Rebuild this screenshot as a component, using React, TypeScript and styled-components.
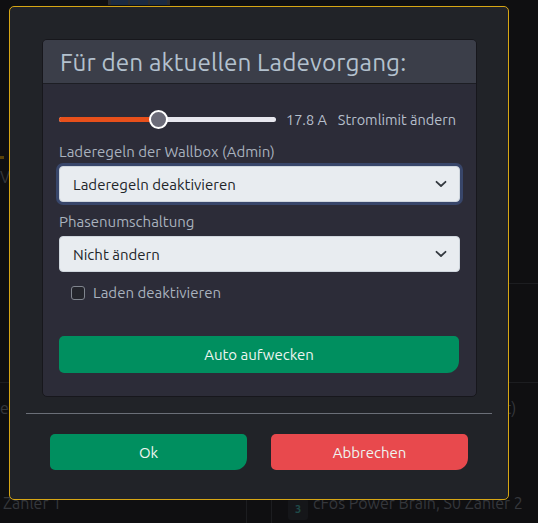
import React from 'react';
import styled, { createGlobalStyle } from 'styled-components';

const GlobalStyle = createGlobalStyle`
  html, body {
    margin: 0;
    padding: 0;
    background: #0f0f11;
    font-family: Ubuntu, 'Noto Sans', 'Open Sans', sans-serif;
  }
`;

const Page = styled.div`
  position: relative;
  width: 538px;
  height: 523px;
  overflow: hidden;
  background: #0f0f11;
`;

// faint dashboard pieces behind the modal overlay
const Behind = styled.div`
  position: absolute;
  inset: 0;
  pointer-events: none;
`;

const TopTiles = styled.div`
  position: absolute;
  left: 108px;
  top: 0;
  width: 56px;
  height: 5px;
  display: flex;
  gap: 2px;
  padding: 0 3px;
  background: #2a2b2f;
`;

const Tile = styled.div`
  flex: 1;
  background: #1b2a42;
`;

const GhostText = styled.span<{ $x: number; $y: number }>`
  position: absolute;
  left: ${(p) => p.$x}px;
  top: ${(p) => p.$y}px;
  color: #35373c;
  font-size: 16px;
  white-space: nowrap;
`;

const GhostLine = styled.div<{ $x: number; $y: number; $w: number; $h: number }>`
  position: absolute;
  left: ${(p) => p.$x}px;
  top: ${(p) => p.$y}px;
  width: ${(p) => p.$w}px;
  height: ${(p) => p.$h}px;
  background: #1c1d20;
`;

const Badge = styled.span`
  position: absolute;
  left: 288px;
  top: 498px;
  width: 20px;
  height: 22px;
  border-radius: 3px;
  background: #151619;
  color: #1f4a48;
  font-size: 11px;
  font-weight: 700;
  display: flex;
  align-items: center;
  justify-content: center;
`;

const OrangeDash = styled.div`
  position: absolute;
  left: 0;
  top: 156px;
  width: 4px;
  height: 3px;
  background: #5a4208;
`;

const Wrapper = styled.div`
  position: relative;
  padding: 6px 0 0 9px;
`;

const Modal = styled.div`
  width: 498px;
  height: 492px;
  background: #212328;
  border: 1px solid #d7a614;
  border-radius: 5px;
  display: flex;
  flex-direction: column;
`;

const Body = styled.div`
  padding: 32px 32px 16px 32px;
`;

const Card = styled.div`
  width: 433px;
  border: 1px solid #17171c;
  border-radius: 5px;
  background: #2c2c38;
  overflow: hidden;
`;

const CardHeader = styled.div`
  height: 43px;
  display: flex;
  align-items: center;
  padding: 0 17px;
  background: #3b3e49;
  border-bottom: 1px solid #1d1e24;
`;

const Title = styled.h4`
  margin: 0;
  font-size: 24.3px;
  font-weight: 400;
  color: #b3c1ce;
  letter-spacing: 0.1px;
`;

const CardBody = styled.div`
  padding: 25px 16px 23px 16px;
  display: flex;
  flex-direction: column;
`;

const SliderRow = styled.div`
  display: flex;
  align-items: center;
  height: 20px;
  color: #b6bfcb;
  font-size: 14.5px;
`;

const Track = styled.div`
  position: relative;
  width: 217px;
  height: 5px;
  border-radius: 3px;
  background: #e7e7ee;
  margin-right: 10px;
`;

const Fill = styled.div`
  height: 100%;
  border-radius: 3px;
  background: #e8501b;
`;

const Thumb = styled.div`
  position: absolute;
  top: 50%;
  width: 15px;
  height: 15px;
  margin-left: -9.5px;
  margin-top: -9.5px;
  border-radius: 50%;
  border: 2px solid #ffffff;
  background: #6b6b78;
`;

const Unit = styled.span`
  margin-right: 11px;
`;

const Label = styled.div<{ $top: number }>`
  margin-top: ${(p) => p.$top}px;
  color: #a9b2be;
  font-size: 15px;
  line-height: 18px;
`;

const SelectBox = styled.div<{ $focus?: boolean }>`
  margin-top: 5px;
  height: 34px;
  border: 1px solid #cfd6dd;
  border-radius: 4px;
  background: #e8ecf0;
  display: flex;
  align-items: center;
  justify-content: space-between;
  padding: 0 12px 0 13px;
  color: #212529;
  font-size: 15px;
  box-shadow: ${(p) => (p.$focus ? '0 0 0 3px #38466a' : 'none')};
`;

const CheckRow = styled.label`
  margin-top: 12px;
  margin-left: 12px;
  display: flex;
  align-items: center;
  gap: 8px;
  color: #a9b2be;
  font-size: 15px;
`;

const CheckBox = styled.span`
  width: 12px;
  height: 12px;
  border: 1px solid #80858e;
  border-radius: 3px;
  background: #24252c;
`;

const Button = styled.button<{ $color: string }>`
  height: 37px;
  border: none;
  border-radius: 5px 5px 12px 5px;
  background: ${(p) => p.$color};
  color: #eef5f1;
  font-family: inherit;
  font-size: 15px;
  cursor: pointer;
`;

const WideButton = styled(Button)`
  width: 400px;
  margin-top: 35px;
`;

const Divider = styled.div`
  margin: 0 16px;
  height: 1px;
  background: #6b6f78;
`;

const Footer = styled.div`
  display: flex;
  gap: 24px;
  padding: 20px 0 0 40px;
`;

const FooterButton = styled(Button)`
  width: 197px;
  height: 36px;
`;

const Chevron = () => (
  <svg width="12" height="8" viewBox="0 0 12 8">
    <path d="M1.5 1.8 L6 6 L10.5 1.8" fill="none" stroke="#343a40" strokeWidth="1.8" strokeLinecap="round" strokeLinejoin="round" />
  </svg>
);

const min = 6;
const max = 32;
const current = 17.8;

export default function App() {
  const frac = (current - min) / (max - min);
  const thumbPos = 9.5 + frac * (217 - 19);
  return (
    <Page>
      <GlobalStyle />
      <Behind>
        <TopTiles>
          <Tile />
          <Tile />
          <Tile />
        </TopTiles>
        <OrangeDash />
        <GhostText $x={0} $y={168}>V</GhostText>
        <GhostLine $x={509} $y={283} $w={29} $h={1} />
        <GhostLine $x={0} $y={382} $w={538} $h={1} />
        <GhostText $x={0} $y={399}>e</GhostText>
        <GhostText $x={505} $y={399}>t)</GhostText>
        <GhostLine $x={246} $y={460} $w={1} $h={63} />
        <GhostLine $x={271} $y={460} $w={1} $h={63} />
        <GhostText $x={3} $y={494}>Zähler 1</GhostText>
        <Badge>3</Badge>
        <GhostText $x={313} $y={494}>cFos Power Brain, S0 Zähler 2</GhostText>
      </Behind>
      <Wrapper>
        <Modal>
          <Body>
            <Card>
              <CardHeader>
                <Title>Für den aktuellen Ladevorgang:</Title>
              </CardHeader>
              <CardBody>
                <SliderRow>
                  <Track>
                    <Fill style={{ width: `${thumbPos}px` }} />
                    <Thumb style={{ left: `${thumbPos}px` }} />
                  </Track>
                  <Unit>{current.toFixed(1)} A</Unit>
                  <span>Stromlimit ändern</span>
                </SliderRow>
                <Label $top={14}>Laderegeln der Wallbox (Admin)</Label>
                <SelectBox $focus>
                  <span>Laderegeln deaktivieren</span>
                  <Chevron />
                </SelectBox>
                <Label $top={11}>Phasenumschaltung</Label>
                <SelectBox>
                  <span>Nicht ändern</span>
                  <Chevron />
                </SelectBox>
                <CheckRow>
                  <CheckBox />
                  Laden deaktivieren
                </CheckRow>
                <WideButton $color="#008f5f">Auto aufwecken</WideButton>
              </CardBody>
            </Card>
          </Body>
          <Divider />
          <Footer>
            <FooterButton $color="#008f5f">Ok</FooterButton>
            <FooterButton $color="#e8494d">Abbrechen</FooterButton>
          </Footer>
        </Modal>
      </Wrapper>
    </Page>
  );
}
